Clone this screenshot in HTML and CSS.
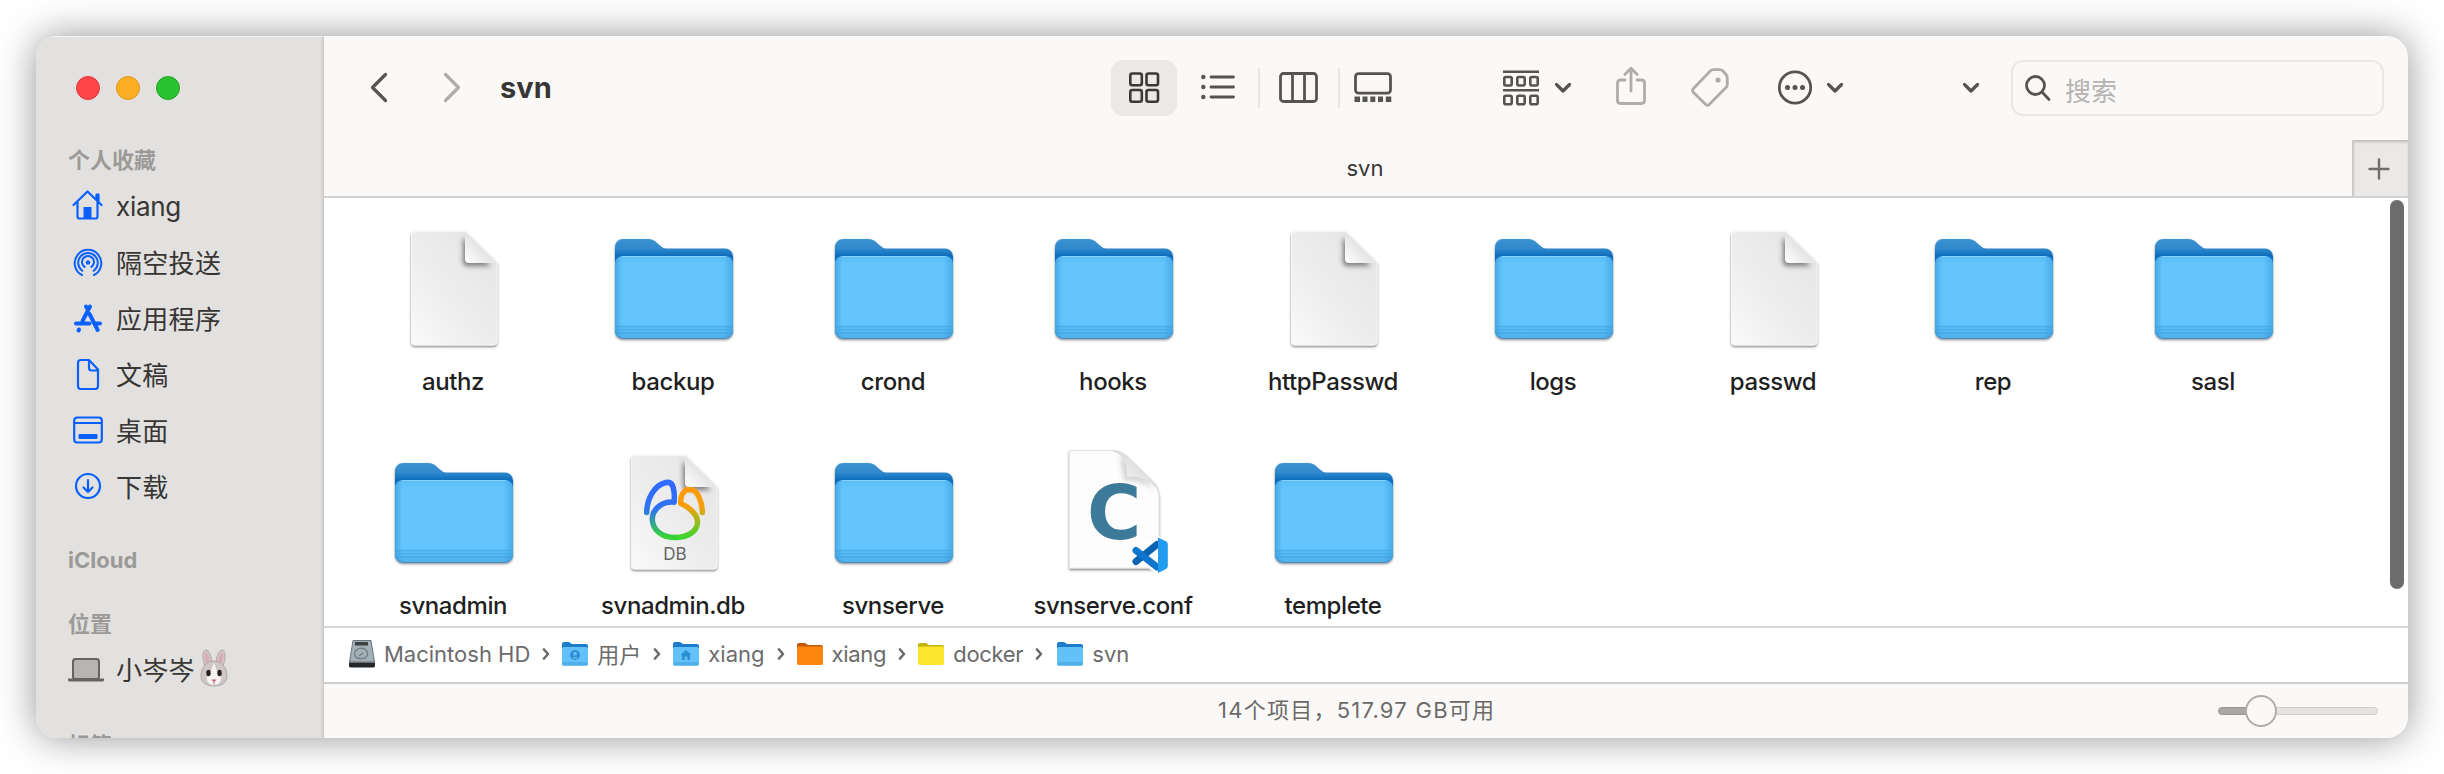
FILE: index.html
```
<!DOCTYPE html>
<html lang="zh-CN">
<head>
<meta charset="utf-8">
<title>svn</title>
<link rel="stylesheet" href="styles.css">
</head>
<body>
<svg class="defs" width="0" height="0">
  <defs>
    <linearGradient id="tab-blue" x1="0" y1="0" x2="0" y2="1"><stop offset="0" stop-color="#3a93d2"/><stop offset=".1" stop-color="#2f88cb"/><stop offset=".17" stop-color="#0f6cbb"/></linearGradient>
    <linearGradient id="front-blue" x1="0" y1="0" x2="0" y2="1"><stop offset="0" stop-color="#5bbdf5"/><stop offset=".1" stop-color="#64c5fb"/><stop offset=".84" stop-color="#64c5fb"/><stop offset="1" stop-color="#4fb1ea"/></linearGradient>
    <linearGradient id="edge-blue" x1="0" y1="0" x2="1" y2="0"><stop offset="0" stop-color="#2f93d8" stop-opacity=".6"/><stop offset=".06" stop-color="#2f93d8" stop-opacity="0"/><stop offset=".92" stop-color="#2f93d8" stop-opacity="0"/><stop offset="1" stop-color="#2f93d8" stop-opacity=".5"/></linearGradient>
    <linearGradient id="paper" x1="1" y1="0" x2="0" y2="1"><stop offset="0" stop-color="#e4e4e4"/><stop offset=".6" stop-color="#eeeeee"/><stop offset="1" stop-color="#fafafa"/></linearGradient>
    <linearGradient id="curl" x1="0" y1="1" x2=".6" y2=".4"><stop offset="0" stop-color="#fff"/><stop offset="1" stop-color="#dedede"/></linearGradient>
    <linearGradient id="elephant-l" gradientUnits="userSpaceOnUse" x1="0" y1="40" x2="0" y2="88"><stop offset="0" stop-color="#2f6bff"/><stop offset=".42" stop-color="#2f74f0"/><stop offset="1" stop-color="#35d435"/></linearGradient>
    <linearGradient id="elephant-r" gradientUnits="userSpaceOnUse" x1="0" y1="40" x2="0" y2="88"><stop offset="0" stop-color="#ff9a0a"/><stop offset=".35" stop-color="#fb9e0a"/><stop offset="1" stop-color="#3fd62f"/></linearGradient>
    <filter id="soft" x="-30%" y="-30%" width="160%" height="160%"><feGaussianBlur stdDeviation="2.8"/></filter>
    <filter id="under" x="-10%" y="-10%" width="120%" height="125%"><feDropShadow dx="0" dy="1.4" stdDeviation="1" flood-color="#000" flood-opacity=".5"/></filter>
    <clipPath id="page-clip"><path d="M24 6h52l31.500 32v79.500a3 3 0 0 1-3 3H24.500a3 3 0 0 1-3-3V9a3 3 0 0 1 3-3z"/></clipPath>
    <symbol id="folder" viewBox="0 0 128 128">
      <g filter="url(#under)">
        <path fill="url(#tab-blue)" d="M5 22a8 8 0 0 1 8-8h25c4 0 6 1 9 4l3 2.500c2.500 2.500 4 3 8 3h57a8 8 0 0 1 8 8v74a8 8 0 0 1-8 8H13a8 8 0 0 1-8-8z"/>
        <path fill="url(#front-blue)" d="M5 39a8 8 0 0 1 8-8h102a8 8 0 0 1 8 8v66a8 8 0 0 1-8 8H13a8 8 0 0 1-8-8z"/>
      </g>
      <path fill="url(#edge-blue)" d="M5 39a8 8 0 0 1 8-8h102a8 8 0 0 1 8 8v66a8 8 0 0 1-8 8H13a8 8 0 0 1-8-8z"/>
      <path fill="none" stroke="#3a9fdf" stroke-opacity=".6" stroke-width="1.300" d="M5 101.500h118M5 104.500h118M6 108h116"/>
      <path fill="none" stroke="#9adcff" stroke-opacity=".7" d="M12 31.500h104"/>
    </symbol>
    <symbol id="doc" viewBox="0 0 128 128">
      <g filter="url(#under)"><path fill="url(#paper)" stroke="#f6f6f6" d="M24.500 6.500H75l32 31.500v79a3 3 0 0 1-3 3H24.500a3 3 0 0 1-3-3V9.500a3 3 0 0 1 3-3z"/></g>
      <g clip-path="url(#page-clip)"><path fill="#444" fill-opacity=".65" filter="url(#soft)" d="M73 12v25q0 4 4 4h24z"/></g>
      <path fill="url(#curl)" d="M75 6.500l32 31.500H79a4 4 0 0 1-4-4z"/>
    </symbol>
    <symbol id="mini-folder" viewBox="0 0 26 26">
      <path fill="#1b7cc9" d="M0 3a2 2 0 0 1 2-2h5l3 2h14a2 2 0 0 1 2 2v17H0z"/>
      <rect y="6" width="26" height="18.500" rx="1.800" fill="#61c1f8"/>
      <path stroke="#3c9fdd" d="M0 22h26M.5 24h25"/>
    </symbol>
    <symbol id="tiny-chev" viewBox="0 0 8 12"><path fill="none" stroke="#6a6a6a" stroke-width="2.600" stroke-linecap="round" stroke-linejoin="round" d="M2 1.500 6 6l-4 4.500"/></symbol>
    <symbol id="down" viewBox="0 0 18 12"><path fill="none" stroke="#555451" stroke-width="3.200" stroke-linecap="round" stroke-linejoin="round" d="M2.500 2.500 9 9l6.500-6.500"/></symbol>
  </defs>
</svg>
<div class="window">
  <aside class="sidebar">
    <div class="lights"><i class="light red"></i><i class="light yellow"></i><i class="light green"></i></div>
    <h2 class="group">个人收藏</h2>
    <ul class="places">
      <li><svg width="32" height="32" viewBox="0 0 32 32"><g fill="none" stroke="#0a60ff" stroke-width="2.200" stroke-linecap="round" stroke-linejoin="round"><path d="M1.500 15 15.500 1.500 29.500 15M5.500 12v14.500q0 2 2 2h16q2 0 2-2V12M24.500 10V4.500H26.500V12"/></g><path fill="#0a60ff" d="M11.500 17h8v11h-8z"/></svg><span class="latin">xiang</span></li>
      <li><svg width="32" height="32" viewBox="0 0 32 32"><g fill="none" stroke="#0a60ff" stroke-width="2" stroke-linecap="round"><path d="M10 29a13.300 13.300 0 1 1 12 0M10.300 24.800a9.800 9.800 0 1 1 11.400 0M12.600 20.900a6 6 0 1 1 6.800 0"/></g><circle cx="16" cy="16.500" r="2.300" fill="#0a60ff"/></svg><span>隔空投送</span></li>
      <li><svg width="32" height="32" viewBox="0 0 32 32"><g fill="none" stroke="#0a60ff" stroke-width="4" stroke-linecap="round"><path d="M18 4.500 10.500 19M14 4.500l1.800 3M17.500 12l8.200 16M4 21.500h13.500M22.500 21.500H28M7 27.500l-.5 1"/></g></svg><span>应用程序</span></li>
      <li><svg width="32" height="32" viewBox="0 0 32 32"><path fill="none" stroke="#0a60ff" stroke-width="2.200" stroke-linejoin="round" d="M9 2h8l9 9.500V28q0 3-3 3H9q-3 0-3-3V5q0-3 3-3zM17 2v8q0 2.500 2.500 2.500H26"/></svg><span>文稿</span></li>
      <li><svg width="32" height="32" viewBox="0 0 32 32"><rect x="2.200" y="3.500" width="27.600" height="25" rx="3" fill="none" stroke="#0a60ff" stroke-width="2.200"/><path fill="none" stroke="#0a60ff" stroke-width="2" d="M2 9h28"/><rect x="6.500" y="20" width="19" height="5" rx="1" fill="#0a60ff"/></svg><span>桌面</span></li>
      <li><svg width="32" height="32" viewBox="0 0 32 32"><g fill="none" stroke="#0a60ff" stroke-width="2.200" stroke-linecap="round" stroke-linejoin="round"><circle cx="16" cy="16" r="12"/><path d="M16 10v12M11.500 17.500 16 22l4.500-4.500"/></g></svg><span>下载</span></li>
    </ul>
    <h2 class="group cloud">iCloud</h2>
    <h2 class="group spot">位置</h2>
    <ul class="places">
      <li><svg class="laptop" width="36" height="26" viewBox="0 0 36 26"><rect x="5" y="2" width="26" height="20" rx="2.500" fill="#b6b5b3" stroke="#656462" stroke-width="2"/><path fill="#656462" d="M0 21.500h36v1.500q0 1.500-2 1.500H2q-2 0-2-1.500z"/></svg><span>小岑岑</span><svg class="rabbit" width="28" height="38" viewBox="0 0 28 38"><g fill="#cfc6c8" stroke="#a89ca0" stroke-width=".8"><path d="M5 17C1.500 8 3 1 6 1s6 7 6 15zM23 17C26.500 8 25 1 22 1s-6 7-6 15z"/><path d="M14 12c8 0 13 7 13 15 0 7-6 10-13 10S1 34 1 27c0-8 5-15 13-15z"/></g><path fill="#dba7b4" d="M6.500 14C4.500 8 5 4 6.200 4s3 5 3.500 9zM21.500 14C23.500 8 23 4 21.800 4s-3 5-3.500 9z"/><path fill="#f6f3f3" d="M14 14c2.500 5 2 9 7 14 1 5-3 8-7 8s-8-3-7-8c5-5 4.500-9 7-14z"/><ellipse cx="8.500" cy="24" rx="2.200" ry="3.300" fill="#26211f"/><ellipse cx="19.500" cy="24" rx="2.200" ry="3.300" fill="#26211f"/><path fill="#d0607a" d="M11.500 30.500h5L14 33.500z"/><path fill="none" stroke="#9a8a8c" d="M14 33v2.500"/></svg></li>
    </ul>
    <h2 class="group tags">标签</h2>
  </aside>
  <main class="main">
    <header class="toolbar">
      <svg class="back" width="18" height="32" viewBox="0 0 18 32"><path fill="none" stroke="#555451" stroke-width="3.200" stroke-linecap="round" stroke-linejoin="round" d="M15.500 2.500 2.500 15.500l13 13"/></svg>
      <svg class="forward" width="18" height="32" viewBox="0 0 18 32"><path fill="none" stroke="#aeadab" stroke-width="3.200" stroke-linecap="round" stroke-linejoin="round" d="M2.500 2.500l13 13-13 13"/></svg>
      <h1 class="title">svn</h1>
      <div class="views">
        <span class="view selected"><svg width="32" height="32" viewBox="0 0 32 32"><g fill="none" stroke="#3a3936" stroke-width="2.600"><rect x="2.300" y="1.500" width="11.500" height="11.800" rx="2"/><rect x="18.500" y="1.500" width="11.500" height="11.800" rx="2"/><rect x="2.300" y="18" width="11.500" height="11.800" rx="2"/><rect x="18.500" y="18" width="11.500" height="11.800" rx="2"/></g></svg></span>
        <span class="view list"><svg width="34" height="28" viewBox="0 0 34 28"><g fill="none" stroke="#555451" stroke-width="2.800" stroke-linecap="round"><path d="M10 3h22.500M10 13h22.500M10 23h22.500"/></g><g fill="#555451"><circle cx="2.300" cy="3" r="2.200"/><circle cx="2.300" cy="13" r="2.200"/><circle cx="2.300" cy="23" r="2.200"/></g></svg></span>
        <i class="rule"></i>
        <span class="view"><svg width="40" height="32" viewBox="0 0 40 32"><g fill="none" stroke="#555451" stroke-width="2.800"><rect x="1.500" y="1.500" width="36" height="28" rx="3"/><path d="M13.500 2v28M25.500 2v28"/></g></svg></span>
        <i class="rule second"></i>
        <span class="view"><svg width="38" height="32" viewBox="0 0 38 32"><rect x="1.500" y="1.600" width="35" height="19.500" rx="3" fill="none" stroke="#555451" stroke-width="2.800"/><path fill="#555451" d="M.5 24.500H6v5.500H.5zM8.500 24.500h5V30h-5zM16.300 24.500h5V30h-5zM24 24.500h5V30h-5zM31.800 24.500h5.500V30h-5.500z"/></svg></span>
      </div>
      <div class="tools">
        <svg class="t-group" width="36" height="36" viewBox="0 0 36 36"><g fill="none" stroke="#555451" stroke-width="2.600"><path d="M0 1.700h36M0 20.300h36"/><rect x="1.300" y="7" width="7.400" height="8.500" rx="1.500"/><rect x="14.300" y="7" width="7.400" height="8.500" rx="1.500"/><rect x="27.300" y="7" width="7.400" height="8.500" rx="1.500"/><rect x="1.300" y="25.800" width="7.400" height="8.500" rx="1.500"/><rect x="14.300" y="25.800" width="7.400" height="8.500" rx="1.500"/><rect x="27.300" y="25.800" width="7.400" height="8.500" rx="1.500"/></g></svg>
        <svg class="t-down1" width="18" height="12"><use href="#down"/></svg>
        <svg class="t-share" width="30" height="40" viewBox="0 0 30 40"><g fill="none" stroke="#aeadab" stroke-width="2.800" stroke-linecap="round" stroke-linejoin="round"><path d="M9 14H4.500Q1.500 14 1.500 17v17.500q0 3 3 3h21q3 0 3-3V17q0-3-3-3H21M15 25V3M8.800 8.500 15 2.300l6.200 6.200"/></g></svg>
        <svg class="t-tag" width="38" height="40" viewBox="0 0 38 40"><path fill="none" stroke="#aeadab" stroke-width="2.800" stroke-linejoin="round" d="M19 3.200q1.500-1.500 3.500-1.500H29q1.700 0 3 1.300L35 6.500q1.300 1.300 1.300 3v7q0 1.700-1.300 3L18.500 36.300q-2 2-4 0L2.500 24.500q-2-2 0-4z"/><circle cx="27" cy="12" r="2.600" fill="#aeadab"/></svg>
        <svg class="t-more" width="36" height="36" viewBox="0 0 36 36"><circle cx="18" cy="17.500" r="15.700" fill="none" stroke="#555451" stroke-width="2.800"/><g fill="#555451"><circle cx="10.500" cy="17.500" r="2.500"/><circle cx="18" cy="17.500" r="2.500"/><circle cx="25.500" cy="17.500" r="2.500"/></g></svg>
        <svg class="t-down2" width="18" height="12"><use href="#down"/></svg>
        <svg class="t-down3" width="18" height="12"><use href="#down"/></svg>
      </div>
      <div class="search"><svg width="28" height="28" viewBox="0 0 28 28"><g fill="none" stroke="#555451" stroke-width="2.800" stroke-linecap="round"><circle cx="11.500" cy="11.500" r="9"/><path d="M18.500 18.500 25 25.500"/></g></svg><span>搜索</span></div>
    </header>
    <div class="tabs"><div class="tab">svn</div><div class="add"><svg width="22" height="22" viewBox="0 0 22 22"><path stroke="#6f6e6c" stroke-width="2.400" stroke-linecap="round" d="M11 1.500v19M1.500 11h19"/></svg></div></div>
    <section class="files">
      <div class="grid">
        <div class="file"><svg width="128" height="128"><use href="#doc"/></svg><span>authz</span></div>
        <div class="file"><svg width="128" height="128"><use href="#folder"/></svg><span>backup</span></div>
        <div class="file"><svg width="128" height="128"><use href="#folder"/></svg><span>crond</span></div>
        <div class="file"><svg width="128" height="128"><use href="#folder"/></svg><span>hooks</span></div>
        <div class="file"><svg width="128" height="128"><use href="#doc"/></svg><span>httpPasswd</span></div>
        <div class="file"><svg width="128" height="128"><use href="#folder"/></svg><span>logs</span></div>
        <div class="file"><svg width="128" height="128"><use href="#doc"/></svg><span>passwd</span></div>
        <div class="file"><svg width="128" height="128"><use href="#folder"/></svg><span>rep</span></div>
        <div class="file"><svg width="128" height="128"><use href="#folder"/></svg><span>sasl</span></div>
        <div class="file"><svg width="128" height="128"><use href="#folder"/></svg><span>svnadmin</span></div>
        <div class="file"><svg width="128" height="128" viewBox="0 0 128 128"><use href="#doc"/><g fill="none" stroke-width="5.500" stroke-linecap="round" stroke-linejoin="round"><path stroke="url(#elephant-l)" d="M36.700 63.500C37 50 44 36 56 33.500Q62 32.500 63.300 39Q65 46 64 53"/><path stroke="url(#elephant-r)" d="M64.700 88.500C77 88.500 88 83 87.500 72C87 65 79 58 70.700 54.500Q70 45 76.500 40.800H80Q85 40 89 48Q92.500 56 92.300 63.500"/><path stroke="url(#elephant-l)" d="M64 53C50 52 42.300 62 42.300 70C42.300 80 51 88.500 64.700 88.500"/></g><text class="db" x="65" y="110.500" text-anchor="middle">DB</text></svg><span>svnadmin.db</span></div>
        <div class="file"><svg width="128" height="128"><use href="#folder"/></svg><span>svnserve</span></div>
        <div class="file"><svg width="128" height="128" viewBox="0 0 128 128"><g filter="url(#under)"><path fill="#fdfdfd" stroke="#d9d9d9" stroke-width=".8" d="M19.300 1.700H62q9 0 15 6l24 23q8 8 8 18v70.500H19.300z"/></g><path fill="#888" fill-opacity=".35" filter="url(#soft)" d="M70 7l4 25q16-2 30 9L98 32z"/><path fill="url(#curl)" stroke="#d4d4d4" stroke-width=".7" d="M63 1.700q14 4 13.700 26.600 20-2 31 11.700-2-5-6.700-9.300L77 7.700q-6-6-14-6z"/><text class="cee" x="37" y="90">C</text><path fill="#fff" stroke="#fff" stroke-width="6" stroke-linejoin="round" d="M108 90l10 4v25l-10 4-24-20z"/><g fill="none" stroke-width="7" stroke-linecap="round"><path stroke="#0b62b0" d="M86 112.500 107 95.500"/><path stroke="#1075cd" d="M86 101.500 107 118"/></g><path fill="#209bee" d="M108 88.500l8 3.800q1.800 1 1.800 3V117q0 2-1.800 3l-8 4z"/></svg><span>svnserve.conf</span></div>
        <div class="file"><svg width="128" height="128"><use href="#folder"/></svg><span>templete</span></div>
      </div>
      <i class="scrollbar"></i>
    </section>
    <nav class="path">
      <span class="crumb"><svg width="26" height="30" viewBox="0 0 26 30"><path fill="#a3b0b7" stroke="#6b747a" d="M4 1.500h18L25.500 23H.5z"/><rect x="6" y="3" width="13" height="3.500" fill="#3a3f42"/><path fill="none" stroke="#6f7d85" stroke-width="1.300" d="M8 19a6.500 5.500 0 1 1 10-2q-2 4-10 2M14 14l-4 3"/><path fill="#25282a" d="M0 23.500h26V27q0 1.500-2 1.500H2Q0 28.500 0 27z"/></svg>Macintosh HD</span>
      <svg width="8" height="12"><use href="#tiny-chev"/></svg>
      <span class="crumb users"><svg width="26" height="26" viewBox="0 0 26 26"><use href="#mini-folder"/><circle cx="13" cy="14" r="5" fill="#2c8fd4"/><circle cx="13" cy="12.700" r="1.900" fill="#61c1f8"/><path fill="#61c1f8" d="M9.800 17.500q3.200-3.500 6.400 0z"/></svg><span>用户</span></span>
      <svg width="8" height="12"><use href="#tiny-chev"/></svg>
      <span class="crumb"><svg width="26" height="26" viewBox="0 0 26 26"><use href="#mini-folder"/><path fill="#2c8fd4" d="M13 9l5.500 5H17v5h-2.600v-3.500h-2.800V19H9v-5H7.500z"/></svg>xiang</span>
      <svg width="8" height="12"><use href="#tiny-chev"/></svg>
      <span class="crumb tight"><svg width="26" height="26" viewBox="0 0 26 26"><path fill="#c25a06" d="M0 4a2 2 0 0 1 2-2h6l3 2h13a2 2 0 0 1 2 2v16H0z"/><rect y="5.500" width="26" height="18.500" rx="1.800" fill="#ff860d"/></svg>xiang</span>
      <svg width="8" height="12"><use href="#tiny-chev"/></svg>
      <span class="crumb tight"><svg width="26" height="26" viewBox="0 0 26 26"><path fill="#c3b20c" d="M0 4a2 2 0 0 1 2-2h6l3 2h13a2 2 0 0 1 2 2v16H0z"/><rect y="5.500" width="26" height="18.500" rx="1.800" fill="#fee62e"/></svg>docker</span>
      <svg width="8" height="12"><use href="#tiny-chev"/></svg>
      <span class="crumb last"><svg width="26" height="26"><use href="#mini-folder"/></svg>svn</span>
    </nav>
    <footer class="status"><span class="count">14个项目，517.97 GB可用</span><div class="slider"><i class="fill"></i><i class="knob"></i><i class="rest"></i></div></footer>
  </main>
</div>
</body>
</html>
```
FILE: styles.css
```
* { box-sizing: border-box; margin: 0; padding: 0; }
body { width: 2444px; height: 774px; padding: 36px; background: #fff; overflow: hidden; font-family: Inter, "Noto Sans CJK SC", sans-serif; color: #373634; }
svg { display: block; flex: none; }
i { display: block; flex: none; }
.defs { position: absolute; }
.window { width: 2372px; height: 702px; display: flex; border-radius: 21px; overflow: hidden; background: #faf9f7; box-shadow: 0 0 38px rgba(0,0,0,.42); }
.sidebar { width: 288px; flex: none; background: #e2e1df; border-right: 1px solid #c9c8c6; box-shadow: inset 0 2px 1px -1px #f4f3f2, inset -3px 0 3px -2px #cfcecc; overflow: hidden; }
.lights { display: flex; gap: 16px; padding: 40px 0 0 40px; }
.light { width: 24px; height: 24px; border-radius: 50%; border: 1px solid; }
.red { background: #fe4648; border-color: #e0383a; }
.yellow { background: #fdae25; border-color: #dd941a; }
.green { background: #2ac231; border-color: #20a527; }
.group { font-size: 22px; line-height: 30px; font-weight: 700; color: #9b9a98; padding-left: 32px; margin-top: 45px; height: 30px; }
.places { list-style: none; margin-top: 3px; }
.places li { height: 56px; display: flex; align-items: center; padding-left: 36px; gap: 12px; font-size: 26px; letter-spacing: .3px; white-space: nowrap; }
.places li + li span { margin-top: -2px; }
.places .latin { letter-spacing: -.3px; }
.cloud { margin-top: 31px; font-size: 22px; }
.spot { margin-top: 34px; }
.places .laptop { margin: 4px 0 0 -4px; }
.spot + .places { margin-top: 1px; }
.rabbit { margin-left: -7px; }
.tags { margin-top: 34px; }
.main { flex: 1; min-width: 0; display: flex; flex-direction: column; }
.toolbar { height: 104px; flex: none; display: flex; align-items: center; padding-left: 46px; }
.forward { margin-left: 55px; }
.title { font-size: 29px; line-height: 40px; font-weight: 700; margin-left: 39px; width: 611px; }
.views { display: flex; align-items: center; }
.view { display: flex; align-items: center; justify-content: center; width: 66px; height: 56px; border-radius: 12px; }
.view + .rule { margin-left: 7px; }
.list { margin-left: 8px; }
.rule { width: 2px; height: 40px; background: #e6e5e3; margin-right: 6px; }
.view + .second { margin: 0 0 0 6px; }
.tools { display: flex; align-items: center; margin-left: 97px; }
.t-down1 { margin-left: 15px; }
.t-share { margin-left: 44px; margin-top: -4px; }
.t-tag { margin-left: 45px; }
.t-more { margin-left: 48px; }
.t-down2 { margin-left: 13px; }
.t-down3 { margin-left: 118px; }
.selected { background: #eae9e7; }
.search { margin-left: 31px; width: 373px; height: 56px; border: 2px solid #e9e8e6; border-radius: 12px; display: flex; align-items: center; padding-left: 11px; gap: 13px; font-size: 26px; color: #b4b3b1; }
.search span { padding-top: 3px; }
.tabs { height: 58px; flex: none; display: flex; border-bottom: 2px solid #d3d2d1; }
.tab { flex: 1; text-align: center; font-size: 22px; line-height: 56px; padding-left: 54px; }
.add { width: 56px; display: flex; align-items: center; justify-content: center; padding-right: 4px; padding-top: 1px; background: #eae9e7; border-left: 2px solid #cccbc9; box-shadow: inset 0 3px 3px -1px #bdbcba; }
.files { height: 428px; flex: none; background: #fff; display: flex; justify-content: space-between; overflow: hidden; }
.grid { display: grid; grid-template-columns: repeat(9, 220px); grid-auto-rows: 224px; padding: 27px 0 0 20px; }
.file { display: flex; flex-direction: column; align-items: center; font-size: 24px; line-height: 32px; font-weight: 450; letter-spacing: -.4px; color: #1f1f1f; white-space: nowrap; }
.file span { margin: 13px 2px 0 0; }
.db { font: 17px Inter, sans-serif; letter-spacing: 0; fill: #666; }
.cee { font: bold 74px "DejaVu Sans", sans-serif; letter-spacing: 0; fill: #3d7a99; }
.scrollbar { width: 14px; height: 389px; margin: 2px 4px 0 0; border-radius: 7px; background: #6c6c6c; }
.path { height: 58px; flex: none; border-top: 2px solid #d6d6d5; border-bottom: 2px solid #cfcecd; background: #fff; display: flex; align-items: center; padding: 0 0 2px 25px; gap: 12px; font-size: 22px; color: #6b6b6b; }
.crumb { display: flex; align-items: center; gap: 9px; white-space: nowrap; }
.users span { margin-top: -2px; }
.tight { letter-spacing: -.3px; }
.last { margin-left: 2px; }
.status { flex: 1; display: flex; align-items: center; }
.count { font-size: 22px; letter-spacing: 1.25px; color: #6b6a68; margin: -6px 0 0 894px; width: 1000px; white-space: nowrap; }
.slider { display: flex; align-items: center; width: 160px; margin-top: -1px; }
.fill { width: 30px; height: 8px; margin-right: -3px; border: 1px solid #989795; border-radius: 4px 0 0 4px; background: #a9a8a6; }
.knob { width: 32px; height: 32px; border: 2px solid #aeadab; border-radius: 50%; background: #faf9f7; z-index: 1; }
.rest { flex: 1; height: 8px; margin-left: -2px; border: 1px solid #d0cfcd; border-radius: 0 4px 4px 0; background: #e4e3e1; }
```
